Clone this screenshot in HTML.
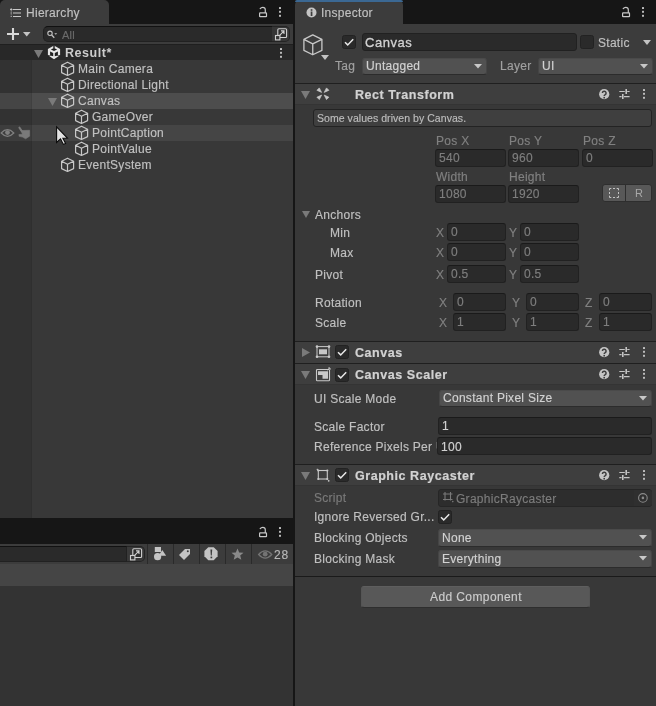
<!DOCTYPE html>
<html><head><meta charset="utf-8">
<style>
*{box-sizing:border-box;margin:0;padding:0}
html,body{width:656px;height:706px;overflow:hidden;background:#161616;font-family:"Liberation Sans",sans-serif;font-size:12px;color:#c4c4c4}
.a{position:absolute}
.t{position:absolute;white-space:nowrap;line-height:16px;letter-spacing:0.28px;will-change:transform;-webkit-text-stroke:0.15px currentColor}
.b{font-weight:bold;letter-spacing:0.55px;font-size:12.5px !important;-webkit-text-stroke:0.2px currentColor}
svg{position:absolute;overflow:visible}
</style></head><body>
<div class="a" style="left:0px;top:0px;width:293px;height:518px;background:#383838;border-radius:0px;"></div>
<div class="a" style="left:0px;top:0px;width:293px;height:24px;background:#161616;border-radius:0px;"></div>
<div class="a" style="left:0px;top:0px;width:109px;height:24px;background:#3c3c3c;border-radius:0px;border-radius:5px 5px 0 0"></div>
<svg style="left:10px;top:8px;" width="12" height="10" viewBox="0 0 12 10"><path d="M3 1.5H11M3 5H11M3 8.5H11" stroke="#c8c8c8" stroke-width="1.1"/><path d="M1.2 0.2V2.8M0 1.5H2.5" stroke="#c8c8c8" stroke-width="0.9"/><rect x="0.7" y="4.5" width="1" height="1" fill="#c8c8c8"/><rect x="0.7" y="8" width="1" height="1" fill="#c8c8c8"/><rect x="0.8" y="3" width="0.8" height="4.5" fill="#888"/></svg>
<div class="t" style="left:25.5px;top:4.8px;color:#c0c0c0;font-size:12px;">Hierarchy</div>
<svg style="left:259px;top:6px;" width="9" height="11" viewBox="0 0 9 11"><rect x="0.6" y="6.9" width="6.9" height="3.8" rx="0.5" fill="none" stroke="#c8c8c8" stroke-width="1.2"/><path d="M6.3 6.6V3.8Q6.3 1.3 3.8 1.3Q2.1 1.3 1.2 2.6" fill="none" stroke="#c8c8c8" stroke-width="1.2" stroke-linecap="round"/></svg>
<svg style="left:279px;top:7px;" width="2" height="10" viewBox="0 0 2 10"><rect x="0" y="0" width="2" height="2" rx="0.5" fill="#c4c4c4"/><rect x="0" y="3.8" width="2" height="2" rx="0.5" fill="#c4c4c4"/><rect x="0" y="7.8" width="2" height="2" rx="0.5" fill="#c4c4c4"/></svg>
<div class="a" style="left:0px;top:24px;width:293px;height:20px;background:#3c3c3c;border-radius:0px;"></div>
<svg style="left:6px;top:27px;" width="14" height="14" viewBox="0 0 14 14"><path d="M7 1V13M1 7H13" stroke="#d8d8d8" stroke-width="2.1"/></svg>
<svg style="left:23px;top:32px;" width="8" height="5" viewBox="0 0 8 5"><path d="M0 0H7.5L3.75 4.5Z" fill="#c4c4c4"/></svg>
<div class="a" style="left:43px;top:26px;width:232px;height:16px;background:#2a2a2a;border:1px solid #212121;border-radius:5px;border-top-color:#111111;border-radius:5px 0 0 5px"></div>
<svg style="left:47px;top:30px;" width="12" height="10" viewBox="0 0 12 10"><circle cx="3" cy="3.3" r="2.2" fill="none" stroke="#c0c0c0" stroke-width="1.1"/><path d="M4.6 5L7.3 7.8" stroke="#c0c0c0" stroke-width="1.3"/><path d="M7.3 3.2H10.2L8.75 4.8Z" fill="#c0c0c0"/></svg>
<div class="t" style="left:61.5px;top:26.5px;color:#6b6b6b;font-size:11px;">All</div>
<div class="a" style="left:272px;top:26px;width:18px;height:16px;background:#363636;border:1px solid #242424;border-radius:0px;border-left:0;border-radius:0 5px 5px 0"></div>
<svg style="left:274px;top:27px;" width="14" height="14" viewBox="0 0 14 14"><rect x="3.8" y="1.7" width="8.8" height="8.8" rx="1" fill="#2e2e2e" stroke="#d0d0d0" stroke-width="1.1"/><rect x="1.5" y="8.5" width="4.4" height="4.4" fill="#363636" stroke="#d0d0d0" stroke-width="1.1"/><path d="M5.6 8.3L9.6 4.3M7 3.9H10V6.9" fill="none" stroke="#d0d0d0" stroke-width="1.1"/></svg>
<div class="a" style="left:0px;top:44px;width:293px;height:16px;background:#282828;border-radius:0px;"></div>
<div class="a" style="left:0px;top:44px;width:293px;height:1px;background:#1f1f1f;border-radius:0px;"></div>
<svg style="left:34px;top:50px;" width="9" height="8" viewBox="0 0 9 8"><path d="M0 0H9L4.5 8Z" fill="#7a7a7a"/></svg>
<svg style="left:45px;top:44px;" width="18" height="18" viewBox="0 0 18 18"><path d="M9 1.6L15.1 5V11.2L9 15.3L2.9 11.2V5Z" fill="#e6e6e6"/><path d="M8.3 1.2H9.7V5H8.3Z M5.9 5.4L9 3.9L12.1 5.4L9 7.1Z M5.1 7.4L8.2 9.1V12.3L5.1 11.6Z M12.9 7.4L9.8 9.1V12.3L12.9 11.6Z M2.5 11.1L5.3 11.5L3.9 12.5Z M15.5 11.1L12.7 11.5L14.1 12.5Z" fill="#1e1e1e"/></svg>
<div class="t b" style="left:64.5px;top:44.8px;color:#cccccc;font-size:12px;-webkit-text-stroke:0">Result*</div>
<svg style="left:280px;top:48px;" width="2" height="10" viewBox="0 0 2 10"><rect x="0" y="0" width="2" height="2" rx="0.5" fill="#c4c4c4"/><rect x="0" y="3.8" width="2" height="2" rx="0.5" fill="#c4c4c4"/><rect x="0" y="7.8" width="2" height="2" rx="0.5" fill="#c4c4c4"/></svg>
<div class="a" style="left:0px;top:93px;width:293px;height:16px;background:#4d4d4d;border-radius:0px;"></div>
<div class="a" style="left:0px;top:125px;width:293px;height:16px;background:#454545;border-radius:0px;"></div>
<div class="a" style="left:0px;top:60px;width:32px;height:458px;background:rgba(0,0,0,0.1);border-radius:0px;border-right:1px solid rgba(0,0,0,0.06)"></div>
<svg style="left:61px;top:61px" width="14.0" height="15.0" viewBox="0 0 14 15"><path d="M6.5 1.2L12.6 4.2V11.6L6.5 14.5L0.6 11.6V4.2Z M0.6 4.2L6.5 7.2L12.6 4.2 M6.5 7.2V14.5" fill="none" stroke="#c8c8c8" stroke-width="1.2" stroke-linejoin="round"/></svg>
<div class="t" style="left:77.5px;top:60.8px;color:#c0c0c0;font-size:12px;">Main Camera</div>
<svg style="left:61px;top:77px" width="14.0" height="15.0" viewBox="0 0 14 15"><path d="M6.5 1.2L12.6 4.2V11.6L6.5 14.5L0.6 11.6V4.2Z M0.6 4.2L6.5 7.2L12.6 4.2 M6.5 7.2V14.5" fill="none" stroke="#c8c8c8" stroke-width="1.2" stroke-linejoin="round"/></svg>
<div class="t" style="left:77.5px;top:76.8px;color:#c0c0c0;font-size:12px;">Directional Light</div>
<svg style="left:61px;top:93px" width="14.0" height="15.0" viewBox="0 0 14 15"><path d="M6.5 1.2L12.6 4.2V11.6L6.5 14.5L0.6 11.6V4.2Z M0.6 4.2L6.5 7.2L12.6 4.2 M6.5 7.2V14.5" fill="none" stroke="#c8c8c8" stroke-width="1.2" stroke-linejoin="round"/></svg>
<div class="t" style="left:77.5px;top:92.8px;color:#c0c0c0;font-size:12px;">Canvas</div>
<svg style="left:75px;top:109px" width="14.0" height="15.0" viewBox="0 0 14 15"><path d="M6.5 1.2L12.6 4.2V11.6L6.5 14.5L0.6 11.6V4.2Z M0.6 4.2L6.5 7.2L12.6 4.2 M6.5 7.2V14.5" fill="none" stroke="#c8c8c8" stroke-width="1.2" stroke-linejoin="round"/></svg>
<div class="t" style="left:91.5px;top:108.8px;color:#c0c0c0;font-size:12px;">GameOver</div>
<svg style="left:75px;top:125px" width="14.0" height="15.0" viewBox="0 0 14 15"><path d="M6.5 1.2L12.6 4.2V11.6L6.5 14.5L0.6 11.6V4.2Z M0.6 4.2L6.5 7.2L12.6 4.2 M6.5 7.2V14.5" fill="none" stroke="#c8c8c8" stroke-width="1.2" stroke-linejoin="round"/></svg>
<div class="t" style="left:91.5px;top:124.8px;color:#c0c0c0;font-size:12px;">PointCaption</div>
<svg style="left:75px;top:141px" width="14.0" height="15.0" viewBox="0 0 14 15"><path d="M6.5 1.2L12.6 4.2V11.6L6.5 14.5L0.6 11.6V4.2Z M0.6 4.2L6.5 7.2L12.6 4.2 M6.5 7.2V14.5" fill="none" stroke="#c8c8c8" stroke-width="1.2" stroke-linejoin="round"/></svg>
<div class="t" style="left:91.5px;top:140.8px;color:#c0c0c0;font-size:12px;">PointValue</div>
<svg style="left:61px;top:157px" width="14.0" height="15.0" viewBox="0 0 14 15"><path d="M6.5 1.2L12.6 4.2V11.6L6.5 14.5L0.6 11.6V4.2Z M0.6 4.2L6.5 7.2L12.6 4.2 M6.5 7.2V14.5" fill="none" stroke="#c8c8c8" stroke-width="1.2" stroke-linejoin="round"/></svg>
<div class="t" style="left:77.5px;top:156.8px;color:#c0c0c0;font-size:12px;">EventSystem</div>
<svg style="left:48px;top:98px;" width="9" height="8" viewBox="0 0 9 8"><path d="M0 0H9L4.5 8Z" fill="#7a7a7a"/></svg>
<svg style="left:0px;top:128px;" width="16" height="10" viewBox="0 0 16 10"><path d="M1.2 5Q7.5 -1.6 13.8 5Q7.5 11.6 1.2 5Z" fill="none" stroke="#808080" stroke-width="1.2"/><circle cx="7.5" cy="4.6" r="2.4" fill="#808080"/></svg>
<svg style="left:16px;top:124px;" width="18" height="18" viewBox="0 0 18 18"><path d="M3.4 3.6L6.6 8.4" stroke="#7a7a7a" stroke-width="1.9" stroke-linecap="round"/><path d="M6.2 6.5L13.6 6.3V12.2L9.6 14.8L6.6 13.1L3.1 12.3L2.9 10.5L6.2 10.3Z" fill="#7a7a7a" stroke="#7a7a7a" stroke-width="0.6" stroke-linejoin="round"/></svg>
<svg style="left:0;top:0" width="656" height="706"><path d="M56.6 126.8L56.6 142.4L60.5 138.9L63.4 144.4L65.6 143.4L62.9 138.2L67.4 138Z" fill="#e2e2e2" stroke="#0a0a0a" stroke-width="1.1" stroke-linejoin="miter"/></svg>
<div class="a" style="left:0px;top:518px;width:293px;height:26px;background:#161616;border-radius:0px;"></div>
<svg style="left:259px;top:526px;" width="9" height="11" viewBox="0 0 9 11"><rect x="0.6" y="6.9" width="6.9" height="3.8" rx="0.5" fill="none" stroke="#c8c8c8" stroke-width="1.2"/><path d="M6.3 6.6V3.8Q6.3 1.3 3.8 1.3Q2.1 1.3 1.2 2.6" fill="none" stroke="#c8c8c8" stroke-width="1.2" stroke-linecap="round"/></svg>
<svg style="left:279px;top:527px;" width="2" height="10" viewBox="0 0 2 10"><rect x="0" y="0" width="2" height="2" rx="0.5" fill="#c4c4c4"/><rect x="0" y="3.8" width="2" height="2" rx="0.5" fill="#c4c4c4"/><rect x="0" y="7.8" width="2" height="2" rx="0.5" fill="#c4c4c4"/></svg>
<div class="a" style="left:0px;top:544px;width:293px;height:20px;background:#3c3c3c;border-radius:0px;"></div>
<div class="a" style="left:-6px;top:546px;width:133px;height:16px;background:#2a2a2a;border:1px solid #212121;border-radius:0px;border-top-color:#111111"></div>
<div class="a" style="left:127px;top:546px;width:18px;height:16px;background:#393939;border:1px solid #242424;border-radius:0px;border-left:0;border-radius:0 5px 5px 0"></div>
<svg style="left:129px;top:547px;" width="14" height="14" viewBox="0 0 14 14"><rect x="3.8" y="1.7" width="8.8" height="8.8" rx="1" fill="#2e2e2e" stroke="#d0d0d0" stroke-width="1.1"/><rect x="1.5" y="8.5" width="4.4" height="4.4" fill="#393939" stroke="#d0d0d0" stroke-width="1.1"/><path d="M5.6 8.3L9.6 4.3M7 3.9H10V6.9" fill="none" stroke="#d0d0d0" stroke-width="1.1"/></svg>
<div class="a" style="left:147px;top:544px;width:1px;height:20px;background:#2a2a2a;border-radius:0px;"></div>
<div class="a" style="left:173px;top:544px;width:1px;height:20px;background:#2a2a2a;border-radius:0px;"></div>
<div class="a" style="left:199px;top:544px;width:1px;height:20px;background:#2a2a2a;border-radius:0px;"></div>
<div class="a" style="left:225px;top:544px;width:1px;height:20px;background:#2a2a2a;border-radius:0px;"></div>
<div class="a" style="left:251px;top:544px;width:1px;height:20px;background:#2a2a2a;border-radius:0px;"></div>
<svg style="left:153px;top:548px;" width="14" height="13" viewBox="0 0 14 13"><rect x="1.8" y="-1" width="6.2" height="5" fill="#c4c4c4"/><path d="M9.3 2L13.1 7.7H5.5Z" fill="#c4c4c4"/><circle cx="4.6" cy="8.7" r="3.6" fill="#c4c4c4"/></svg>
<svg style="left:178px;top:548px;" width="14" height="13" viewBox="0 0 14 13"><path d="M7 1H12V6L6 12L1 7Z" fill="#c4c4c4"/><circle cx="9.8" cy="3.2" r="1" fill="#3c3c3c"/></svg>
<svg style="left:204px;top:547px;" width="14" height="14" viewBox="0 0 14 14"><path d="M4.3 0.2H9.7L13.6 4.1V9.3L9.7 13.2H4.3L0.4 9.3V4.1Z" fill="#c4c4c4"/><path d="M6.4 2.6H8.2L7.8 8.6H6.8Z" fill="#3c3c3c"/><rect x="6.5" y="9.6" width="1.7" height="1.7" fill="#3c3c3c"/></svg>
<svg style="left:231px;top:548px;" width="13" height="13" viewBox="0 0 13 13"><path d="M6.5 0.5L8.2 4.6L12.5 4.8L9.2 7.6L10.3 11.8L6.5 9.4L2.7 11.8L3.8 7.6L0.5 4.8L4.8 4.6Z" fill="#8a8a8a"/></svg>
<svg style="left:258px;top:550px;" width="15" height="9" viewBox="0 0 15 9"><path d="M0.6 4.5Q7.2 -2.6 13.8 4.5Q7.2 11.6 0.6 4.5Z" fill="none" stroke="#747474" stroke-width="1.2"/><circle cx="7.2" cy="4.2" r="2.4" fill="#747474"/></svg>
<div class="t" style="left:274.0px;top:546.8px;color:#b8b8b8;font-size:12px;letter-spacing:0.9px">28</div>
<div class="a" style="left:0px;top:564px;width:293px;height:22px;background:#454545;border-radius:0px;"></div>
<div class="a" style="left:0px;top:586px;width:293px;height:120px;background:#333333;border-radius:0px;"></div>
<div class="a" style="left:295px;top:0px;width:361px;height:706px;background:#383838;border-radius:0px;"></div>
<div class="a" style="left:295px;top:0px;width:361px;height:24px;background:#161616;border-radius:0px;"></div>
<div class="a" style="left:295px;top:0px;width:108px;height:24px;background:#3c3c3c;border-radius:0px;border-radius:5px 5px 0 0"></div>
<div class="a" style="left:295px;top:0px;width:108px;height:2px;background:#3b6893;border-radius:0px;border-radius:5px 5px 0 0"></div>
<svg style="left:306px;top:7px;" width="11" height="11" viewBox="0 0 11 11"><circle cx="5.5" cy="5.5" r="5" fill="#c4c4c4"/><rect x="4.7" y="4.5" width="1.7" height="4.5" fill="#3c3c3c"/><rect x="4.7" y="2.2" width="1.7" height="1.6" fill="#3c3c3c"/></svg>
<div class="t" style="left:320.5px;top:4.8px;color:#c0c0c0;font-size:12px;">Inspector</div>
<svg style="left:622px;top:6px;" width="9" height="11" viewBox="0 0 9 11"><rect x="0.6" y="6.9" width="6.9" height="3.8" rx="0.5" fill="none" stroke="#c8c8c8" stroke-width="1.2"/><path d="M6.3 6.6V3.8Q6.3 1.3 3.8 1.3Q2.1 1.3 1.2 2.6" fill="none" stroke="#c8c8c8" stroke-width="1.2" stroke-linecap="round"/></svg>
<svg style="left:642px;top:7px;" width="2" height="10" viewBox="0 0 2 10"><rect x="0" y="0" width="2" height="2" rx="0.5" fill="#c4c4c4"/><rect x="0" y="3.8" width="2" height="2" rx="0.5" fill="#c4c4c4"/><rect x="0" y="7.8" width="2" height="2" rx="0.5" fill="#c4c4c4"/></svg>
<div class="a" style="left:295px;top:24px;width:361px;height:59px;background:#3c3c3c;border-radius:0px;"></div>
<svg style="left:302.6px;top:33.4px" width="21.0" height="22.5" viewBox="0 0 14 15"><path d="M6.5 1.2L12.6 4.2V11.6L6.5 14.5L0.6 11.6V4.2Z M0.6 4.2L6.5 7.2L12.6 4.2 M6.5 7.2V14.5" fill="none" stroke="#c8c8c8" stroke-width="0.8666666666666667" stroke-linejoin="round"/></svg>
<svg style="left:321px;top:55px;" width="8" height="5" viewBox="0 0 8 5"><path d="M0 0H8L4 5Z" fill="#c4c4c4"/></svg>
<div class="a" style="left:342px;top:35px;width:14px;height:14px;background:#2a2a2a;border:1px solid #222222;border-radius:2.5px;"></div>
<svg style="left:342px;top:35px;" width="14" height="14" viewBox="0 0 14 14"><path d="M3 7.3L5.7 9.9L11.2 4.2" fill="none" stroke="#e8e8e8" stroke-width="1.5"/></svg>
<div class="a" style="left:362px;top:33px;width:215px;height:18px;background:#2a2a2a;border:1px solid #212121;border-radius:3px;"></div>
<div class="t" style="left:365.0px;top:34.99999999999999px;color:#d2d2d2;font-size:13px;letter-spacing:0.55px;-webkit-text-stroke:0.3px currentColor">Canvas</div>
<div class="a" style="left:580px;top:35px;width:14px;height:14px;background:#2a2a2a;border:1px solid #222222;border-radius:2.5px;"></div>
<div class="t" style="left:597.5px;top:34.8px;color:#c0c0c0;font-size:12px;">Static</div>
<svg style="left:643px;top:40px;" width="8" height="5" viewBox="0 0 8 5"><path d="M0 0H8L4 5Z" fill="#c4c4c4"/></svg>
<div class="t" style="left:334.5px;top:57.8px;color:#a0a0a0;font-size:12px;">Tag</div>
<div class="a" style="left:362px;top:58px;width:125px;height:17px;background:#515151;border:1px solid #303030;border-radius:3px;border-color:#4a4a4a #454545 #2c2c2c #454545"></div>
<div class="t" style="left:365.5px;top:58.3px;color:#d2d2d2;font-size:12px;">Untagged</div>
<svg style="left:474px;top:64px;" width="8" height="5" viewBox="0 0 8 5"><path d="M0 0H8L4 4.6Z" fill="#c8c8c8"/></svg>
<div class="t" style="left:499.5px;top:57.8px;color:#a0a0a0;font-size:12px;">Layer</div>
<div class="a" style="left:538px;top:58px;width:115px;height:17px;background:#515151;border:1px solid #303030;border-radius:3px;border-color:#4a4a4a #454545 #2c2c2c #454545"></div>
<div class="t" style="left:541.5px;top:58.3px;color:#d2d2d2;font-size:12px;">UI</div>
<svg style="left:640px;top:64px;" width="8" height="5" viewBox="0 0 8 5"><path d="M0 0H8L4 4.6Z" fill="#c8c8c8"/></svg>
<div class="a" style="left:295px;top:83px;width:361px;height:1px;background:#1f1f1f;border-radius:0px;"></div>
<div class="a" style="left:295px;top:84px;width:361px;height:20px;background:#3e3e3e;border-radius:0px;"></div>
<div class="a" style="left:295px;top:104px;width:361px;height:1px;background:#343434;border-radius:0px;"></div>
<svg style="left:301px;top:91px;" width="9" height="8" viewBox="0 0 9 8"><path d="M0 0H9L4.5 8Z" fill="#7a7a7a"/></svg>
<div class="t b" style="left:354.5px;top:86.6px;color:#d2d2d2;font-size:12px;">Rect Transform</div>
<svg style="left:598.8px;top:89px;" width="11" height="11" viewBox="0 0 11 11"><circle cx="5.2" cy="5.2" r="5.1" fill="#c4c4c4"/><path d="M3.4 4.1A1.85 1.85 0 1 1 6 5.8Q5.2 6.2 5.2 7.1" fill="none" stroke="#3e3e3e" stroke-width="1.5"/><rect x="4.4" y="7.9" width="1.6" height="1.6" fill="#3e3e3e"/></svg>
<svg style="left:618.5px;top:89px;" width="11" height="11" viewBox="0 0 11 11"><path d="M0.3 2.5H5.8M8.2 2.5H10.6M0.3 7.6H2.6M5 7.6H10.6" stroke="#c4c4c4" stroke-width="1.2"/><path d="M7.2 0V5M3.8 5.1V10.1" stroke="#c4c4c4" stroke-width="1.6"/></svg>
<svg style="left:643px;top:89.2px;" width="2" height="10" viewBox="0 0 2 10"><rect x="0" y="0" width="2" height="2" rx="0.5" fill="#c4c4c4"/><rect x="0" y="3.8" width="2" height="2" rx="0.5" fill="#c4c4c4"/><rect x="0" y="7.8" width="2" height="2" rx="0.5" fill="#c4c4c4"/></svg>
<svg style="left:316px;top:87px;" width="14" height="14" viewBox="0 0 14 14"><path d="M0.9 3.3L3.3 0.9L5.6 5.4Z M12.9 3.3L10.5 0.9L8.2 5.4Z M0.9 10.2L3.3 12.6L5.6 8.1Z M12.9 10.2L10.5 12.6L8.2 8.1Z" fill="#c8c8c8" stroke="#c8c8c8" stroke-width="0.7" stroke-linejoin="round"/></svg>
<div class="a" style="left:295px;top:105px;width:361px;height:1px;background:#383838;border-radius:0px;"></div>
<div class="a" style="left:313px;top:109px;width:339px;height:18px;background:rgba(96,96,96,0.2);border:1px solid #232323;border-radius:3px;"></div>
<div class="t" style="left:316.5px;top:110.3px;color:#bdbdbd;font-size:10.5px;letter-spacing:0.05px">Some values driven by Canvas.</div>
<div class="t" style="left:435.5px;top:132.8px;color:#808080;font-size:12px;">Pos X</div>
<div class="t" style="left:508.5px;top:132.8px;color:#808080;font-size:12px;">Pos Y</div>
<div class="t" style="left:582.5px;top:132.8px;color:#808080;font-size:12px;">Pos Z</div>
<div class="a" style="left:435px;top:149px;width:71px;height:18px;background:#2a2a2a;border:1px solid #212121;border-radius:3px;border-top-color:#1a1a1a"></div>
<div class="t" style="left:438.5px;top:149.8px;color:#7e7e7e;font-size:12px;">540</div>
<div class="a" style="left:508px;top:149px;width:71px;height:18px;background:#2a2a2a;border:1px solid #212121;border-radius:3px;border-top-color:#1a1a1a"></div>
<div class="t" style="left:511.5px;top:149.8px;color:#7e7e7e;font-size:12px;">960</div>
<div class="a" style="left:582px;top:149px;width:71px;height:18px;background:#2a2a2a;border:1px solid #212121;border-radius:3px;border-top-color:#1a1a1a"></div>
<div class="t" style="left:585.5px;top:149.8px;color:#7e7e7e;font-size:12px;">0</div>
<div class="t" style="left:435.5px;top:168.8px;color:#808080;font-size:12px;">Width</div>
<div class="t" style="left:508.5px;top:168.8px;color:#808080;font-size:12px;">Height</div>
<div class="a" style="left:435px;top:185px;width:71px;height:18px;background:#2a2a2a;border:1px solid #212121;border-radius:3px;border-top-color:#1a1a1a"></div>
<div class="t" style="left:438.5px;top:185.8px;color:#7e7e7e;font-size:12px;">1080</div>
<div class="a" style="left:508px;top:185px;width:71px;height:18px;background:#2a2a2a;border:1px solid #212121;border-radius:3px;border-top-color:#1a1a1a"></div>
<div class="t" style="left:511.5px;top:185.8px;color:#7e7e7e;font-size:12px;">1920</div>
<div class="a" style="left:602px;top:184px;width:50px;height:18px;background:#585858;border:1px solid #2e2e2e;border-radius:3px;"></div>
<div class="a" style="left:625px;top:184px;width:1px;height:18px;background:#2e2e2e;border-radius:0px;"></div>
<svg style="left:608px;top:187px;" width="12" height="12" viewBox="0 0 12 12"><path d="M1.5 3.3V1.5H3.3M8.7 1.5H10.5V3.3M10.5 8.7V10.5H8.7M3.3 10.5H1.5V8.7M5 1.5H7M5 10.5H7M1.5 5V7M10.5 5V7" fill="none" stroke="#c4c4c4" stroke-width="1"/></svg>
<div class="t" style="left:635.0px;top:185.0px;color:#a8a8a8;font-size:11px;-webkit-text-stroke:0">R</div>
<svg style="left:302px;top:211px;" width="8" height="7" viewBox="0 0 8 7"><path d="M0 0H8L4.0 7Z" fill="#7a7a7a"/></svg>
<div class="t" style="left:314.5px;top:206.8px;color:#c0c0c0;font-size:12px;">Anchors</div>
<div class="t" style="left:329.5px;top:224.8px;color:#c0c0c0;font-size:12px;">Min</div>
<div class="t" style="left:329.5px;top:244.8px;color:#c0c0c0;font-size:12px;">Max</div>
<div class="t" style="left:314.5px;top:266.8px;color:#c0c0c0;font-size:12px;">Pivot</div>
<div class="t" style="left:314.5px;top:294.8px;color:#c0c0c0;font-size:12px;">Rotation</div>
<div class="t" style="left:314.5px;top:314.8px;color:#c0c0c0;font-size:12px;">Scale</div>
<div class="t" style="left:435.5px;top:224.8px;color:#808080;font-size:12px;">X</div>
<div class="a" style="left:447px;top:223px;width:59px;height:18px;background:#2a2a2a;border:1px solid #212121;border-radius:3px;border-top-color:#1a1a1a"></div>
<div class="t" style="left:450.5px;top:223.8px;color:#7e7e7e;font-size:12px;">0</div>
<div class="t" style="left:508.5px;top:224.8px;color:#808080;font-size:12px;">Y</div>
<div class="a" style="left:520px;top:223px;width:59px;height:18px;background:#2a2a2a;border:1px solid #212121;border-radius:3px;border-top-color:#1a1a1a"></div>
<div class="t" style="left:523.5px;top:223.8px;color:#7e7e7e;font-size:12px;">0</div>
<div class="t" style="left:435.5px;top:244.8px;color:#808080;font-size:12px;">X</div>
<div class="a" style="left:447px;top:243px;width:59px;height:18px;background:#2a2a2a;border:1px solid #212121;border-radius:3px;border-top-color:#1a1a1a"></div>
<div class="t" style="left:450.5px;top:243.8px;color:#7e7e7e;font-size:12px;">0</div>
<div class="t" style="left:508.5px;top:244.8px;color:#808080;font-size:12px;">Y</div>
<div class="a" style="left:520px;top:243px;width:59px;height:18px;background:#2a2a2a;border:1px solid #212121;border-radius:3px;border-top-color:#1a1a1a"></div>
<div class="t" style="left:523.5px;top:243.8px;color:#7e7e7e;font-size:12px;">0</div>
<div class="t" style="left:435.5px;top:266.8px;color:#808080;font-size:12px;">X</div>
<div class="a" style="left:447px;top:265px;width:59px;height:18px;background:#2a2a2a;border:1px solid #212121;border-radius:3px;border-top-color:#1a1a1a"></div>
<div class="t" style="left:450.5px;top:265.8px;color:#7e7e7e;font-size:12px;">0.5</div>
<div class="t" style="left:508.5px;top:266.8px;color:#808080;font-size:12px;">Y</div>
<div class="a" style="left:520px;top:265px;width:59px;height:18px;background:#2a2a2a;border:1px solid #212121;border-radius:3px;border-top-color:#1a1a1a"></div>
<div class="t" style="left:523.5px;top:265.8px;color:#7e7e7e;font-size:12px;">0.5</div>
<div class="t" style="left:438.5px;top:294.8px;color:#808080;font-size:12px;">X</div>
<div class="a" style="left:453px;top:293px;width:53px;height:18px;background:#2a2a2a;border:1px solid #212121;border-radius:3px;border-top-color:#1a1a1a"></div>
<div class="t" style="left:456.5px;top:293.8px;color:#7e7e7e;font-size:12px;">0</div>
<div class="t" style="left:511.5px;top:294.8px;color:#808080;font-size:12px;">Y</div>
<div class="a" style="left:526px;top:293px;width:53px;height:18px;background:#2a2a2a;border:1px solid #212121;border-radius:3px;border-top-color:#1a1a1a"></div>
<div class="t" style="left:529.5px;top:293.8px;color:#7e7e7e;font-size:12px;">0</div>
<div class="t" style="left:584.5px;top:294.8px;color:#808080;font-size:12px;">Z</div>
<div class="a" style="left:599px;top:293px;width:53px;height:18px;background:#2a2a2a;border:1px solid #212121;border-radius:3px;border-top-color:#1a1a1a"></div>
<div class="t" style="left:602.5px;top:293.8px;color:#7e7e7e;font-size:12px;">0</div>
<div class="t" style="left:438.5px;top:314.8px;color:#808080;font-size:12px;">X</div>
<div class="a" style="left:453px;top:313px;width:53px;height:18px;background:#2a2a2a;border:1px solid #212121;border-radius:3px;border-top-color:#1a1a1a"></div>
<div class="t" style="left:456.5px;top:313.8px;color:#7e7e7e;font-size:12px;">1</div>
<div class="t" style="left:511.5px;top:314.8px;color:#808080;font-size:12px;">Y</div>
<div class="a" style="left:526px;top:313px;width:53px;height:18px;background:#2a2a2a;border:1px solid #212121;border-radius:3px;border-top-color:#1a1a1a"></div>
<div class="t" style="left:529.5px;top:313.8px;color:#7e7e7e;font-size:12px;">1</div>
<div class="t" style="left:584.5px;top:314.8px;color:#808080;font-size:12px;">Z</div>
<div class="a" style="left:599px;top:313px;width:53px;height:18px;background:#2a2a2a;border:1px solid #212121;border-radius:3px;border-top-color:#1a1a1a"></div>
<div class="t" style="left:602.5px;top:313.8px;color:#7e7e7e;font-size:12px;">1</div>
<div class="a" style="left:295px;top:341px;width:361px;height:1px;background:#1f1f1f;border-radius:0px;"></div>
<div class="a" style="left:295px;top:342px;width:361px;height:21px;background:#3e3e3e;border-radius:0px;"></div>
<div class="a" style="left:295px;top:363px;width:361px;height:1px;background:#343434;border-radius:0px;"></div>
<svg style="left:302px;top:348px;" width="8" height="9" viewBox="0 0 8 9"><path d="M0 0L8 4.5L0 9Z" fill="#7a7a7a"/></svg>
<div class="t b" style="left:354.5px;top:344.6px;color:#d2d2d2;font-size:12px;">Canvas</div>
<svg style="left:598.8px;top:347px;" width="11" height="11" viewBox="0 0 11 11"><circle cx="5.2" cy="5.2" r="5.1" fill="#c4c4c4"/><path d="M3.4 4.1A1.85 1.85 0 1 1 6 5.8Q5.2 6.2 5.2 7.1" fill="none" stroke="#3e3e3e" stroke-width="1.5"/><rect x="4.4" y="7.9" width="1.6" height="1.6" fill="#3e3e3e"/></svg>
<svg style="left:618.5px;top:347px;" width="11" height="11" viewBox="0 0 11 11"><path d="M0.3 2.5H5.8M8.2 2.5H10.6M0.3 7.6H2.6M5 7.6H10.6" stroke="#c4c4c4" stroke-width="1.2"/><path d="M7.2 0V5M3.8 5.1V10.1" stroke="#c4c4c4" stroke-width="1.6"/></svg>
<svg style="left:643px;top:347.2px;" width="2" height="10" viewBox="0 0 2 10"><rect x="0" y="0" width="2" height="2" rx="0.5" fill="#c4c4c4"/><rect x="0" y="3.8" width="2" height="2" rx="0.5" fill="#c4c4c4"/><rect x="0" y="7.8" width="2" height="2" rx="0.5" fill="#c4c4c4"/></svg>
<svg style="left:315px;top:345px;" width="16" height="14" viewBox="0 0 16 14"><rect x="2" y="1.6" width="12" height="10.2" fill="none" stroke="#c8c8c8" stroke-width="1"/><rect x="4" y="4.3" width="8" height="5" fill="#c8c8c8"/><circle cx="2" cy="1.6" r="1.3" fill="#c8c8c8"/><circle cx="14" cy="1.6" r="1.3" fill="#c8c8c8"/><circle cx="2" cy="11.8" r="1.3" fill="#c8c8c8"/><circle cx="14" cy="11.8" r="1.3" fill="#c8c8c8"/></svg>
<div class="a" style="left:335px;top:345px;width:14px;height:14px;background:#2a2a2a;border:1px solid #222222;border-radius:2.5px;"></div>
<svg style="left:335px;top:345px;" width="14" height="14" viewBox="0 0 14 14"><path d="M3 7.3L5.7 9.9L11.2 4.2" fill="none" stroke="#e8e8e8" stroke-width="1.5"/></svg>
<div class="a" style="left:295px;top:363px;width:361px;height:1px;background:#1f1f1f;border-radius:0px;"></div>
<div class="a" style="left:295px;top:364px;width:361px;height:20px;background:#3e3e3e;border-radius:0px;"></div>
<div class="a" style="left:295px;top:384px;width:361px;height:1px;background:#343434;border-radius:0px;"></div>
<svg style="left:301px;top:371px;" width="9" height="8" viewBox="0 0 9 8"><path d="M0 0H9L4.5 8Z" fill="#7a7a7a"/></svg>
<div class="t b" style="left:354.5px;top:366.6px;color:#d2d2d2;font-size:12px;">Canvas Scaler</div>
<svg style="left:598.8px;top:369px;" width="11" height="11" viewBox="0 0 11 11"><circle cx="5.2" cy="5.2" r="5.1" fill="#c4c4c4"/><path d="M3.4 4.1A1.85 1.85 0 1 1 6 5.8Q5.2 6.2 5.2 7.1" fill="none" stroke="#3e3e3e" stroke-width="1.5"/><rect x="4.4" y="7.9" width="1.6" height="1.6" fill="#3e3e3e"/></svg>
<svg style="left:618.5px;top:369px;" width="11" height="11" viewBox="0 0 11 11"><path d="M0.3 2.5H5.8M8.2 2.5H10.6M0.3 7.6H2.6M5 7.6H10.6" stroke="#c4c4c4" stroke-width="1.2"/><path d="M7.2 0V5M3.8 5.1V10.1" stroke="#c4c4c4" stroke-width="1.6"/></svg>
<svg style="left:643px;top:369.2px;" width="2" height="10" viewBox="0 0 2 10"><rect x="0" y="0" width="2" height="2" rx="0.5" fill="#c4c4c4"/><rect x="0" y="3.8" width="2" height="2" rx="0.5" fill="#c4c4c4"/><rect x="0" y="7.8" width="2" height="2" rx="0.5" fill="#c4c4c4"/></svg>
<svg style="left:315px;top:368px;" width="16" height="14" viewBox="0 0 16 14"><rect x="1.5" y="1.5" width="13" height="11.2" rx="0.8" fill="none" stroke="#c8c8c8" stroke-width="1.1"/><path d="M3 3.2H13V10.7H7.5V7H3Z" fill="#c8c8c8"/><path d="M12.2 2.2L14.8 0M13.2 0H15V1.8" stroke="#c8c8c8" stroke-width="1"/></svg>
<div class="a" style="left:335px;top:368px;width:14px;height:14px;background:#2a2a2a;border:1px solid #222222;border-radius:2.5px;"></div>
<svg style="left:335px;top:368px;" width="14" height="14" viewBox="0 0 14 14"><path d="M3 7.3L5.7 9.9L11.2 4.2" fill="none" stroke="#e8e8e8" stroke-width="1.5"/></svg>
<div class="t" style="left:313.5px;top:390.8px;color:#c0c0c0;font-size:12px;">UI Scale Mode</div>
<div class="a" style="left:439px;top:390px;width:213px;height:17px;background:#515151;border:1px solid #303030;border-radius:3px;border-color:#4a4a4a #454545 #2c2c2c #454545"></div>
<div class="t" style="left:442.5px;top:390.3px;color:#d2d2d2;font-size:12px;">Constant Pixel Size</div>
<svg style="left:639px;top:396px;" width="8" height="5" viewBox="0 0 8 5"><path d="M0 0H8L4 4.6Z" fill="#c8c8c8"/></svg>
<div class="t" style="left:313.5px;top:418.5px;color:#c0c0c0;font-size:12px;">Scale Factor</div>
<div class="a" style="left:438px;top:417px;width:214px;height:18px;background:#2a2a2a;border:1px solid #212121;border-radius:3px;border-top-color:#1a1a1a"></div>
<div class="t" style="left:441.5px;top:417.8px;color:#d2d2d2;font-size:12px;">1</div>
<div class="t" style="left:313.5px;top:438.5px;color:#c0c0c0;font-size:12px;">Reference Pixels Per U</div>
<div class="a" style="left:437px;top:437px;width:215px;height:18px;background:#2a2a2a;border:1px solid #212121;border-radius:3px;border-top-color:#1a1a1a"></div>
<div class="t" style="left:440.5px;top:439.3px;color:#d2d2d2;font-size:12px;">100</div>
<div class="a" style="left:295px;top:464px;width:361px;height:1px;background:#1f1f1f;border-radius:0px;"></div>
<div class="a" style="left:295px;top:465px;width:361px;height:20px;background:#3e3e3e;border-radius:0px;"></div>
<div class="a" style="left:295px;top:485px;width:361px;height:1px;background:#343434;border-radius:0px;"></div>
<svg style="left:301px;top:472px;" width="9" height="8" viewBox="0 0 9 8"><path d="M0 0H9L4.5 8Z" fill="#7a7a7a"/></svg>
<div class="t b" style="left:354.5px;top:467.6px;color:#d2d2d2;font-size:12px;">Graphic Raycaster</div>
<svg style="left:598.8px;top:470px;" width="11" height="11" viewBox="0 0 11 11"><circle cx="5.2" cy="5.2" r="5.1" fill="#c4c4c4"/><path d="M3.4 4.1A1.85 1.85 0 1 1 6 5.8Q5.2 6.2 5.2 7.1" fill="none" stroke="#3e3e3e" stroke-width="1.5"/><rect x="4.4" y="7.9" width="1.6" height="1.6" fill="#3e3e3e"/></svg>
<svg style="left:618.5px;top:470px;" width="11" height="11" viewBox="0 0 11 11"><path d="M0.3 2.5H5.8M8.2 2.5H10.6M0.3 7.6H2.6M5 7.6H10.6" stroke="#c4c4c4" stroke-width="1.2"/><path d="M7.2 0V5M3.8 5.1V10.1" stroke="#c4c4c4" stroke-width="1.6"/></svg>
<svg style="left:643px;top:470.2px;" width="2" height="10" viewBox="0 0 2 10"><rect x="0" y="0" width="2" height="2" rx="0.5" fill="#c4c4c4"/><rect x="0" y="3.8" width="2" height="2" rx="0.5" fill="#c4c4c4"/><rect x="0" y="7.8" width="2" height="2" rx="0.5" fill="#c4c4c4"/></svg>
<svg style="left:315px;top:467px;" width="16" height="16" viewBox="0 0 16 16"><rect x="3.3" y="3.5" width="9" height="8.5" fill="none" stroke="#c8c8c8" stroke-width="1.1"/><circle cx="3.3" cy="3.5" r="1.1" fill="#c8c8c8"/><circle cx="12.3" cy="3.5" r="1.1" fill="#c8c8c8"/><circle cx="3.3" cy="12" r="1.1" fill="#c8c8c8"/><circle cx="12.3" cy="12" r="1.1" fill="#c8c8c8"/><path d="M1.8 1.8L3.3 3.5" stroke="#c8c8c8" stroke-width="1.1"/><circle cx="13.7" cy="13.8" r="0.9" fill="#c8c8c8"/></svg>
<div class="a" style="left:335px;top:468px;width:14px;height:14px;background:#2a2a2a;border:1px solid #222222;border-radius:2.5px;"></div>
<svg style="left:335px;top:468px;" width="14" height="14" viewBox="0 0 14 14"><path d="M3 7.3L5.7 9.9L11.2 4.2" fill="none" stroke="#e8e8e8" stroke-width="1.5"/></svg>
<div class="t" style="left:313.5px;top:489.8px;color:#7a7a7a;font-size:12px;">Script</div>
<div class="a" style="left:438px;top:489px;width:214px;height:18px;background:#2a2a2a;border:1px solid #212121;border-radius:3px;opacity:0.75"></div>
<svg style="left:442px;top:491px;" width="12" height="12" viewBox="0 0 12 12"><path d="M3 1V9.5M8.5 1V9.5M1 3H10.5M1 8.5H10.5" stroke="#7a7a7a" stroke-width="1.1"/><circle cx="10.8" cy="10.6" r="0.8" fill="#7a7a7a"/></svg>
<div class="t" style="left:455.5px;top:490.8px;color:#7c7c7c;font-size:12px;">GraphicRaycaster</div>
<div class="a" style="left:634px;top:490px;width:18px;height:16px;background:#2f2f2f;border-radius:0px;border-radius:0 2px 2px 0"></div>
<svg style="left:638px;top:493px;" width="10" height="10" viewBox="0 0 10 10"><circle cx="4.9" cy="4.9" r="4.3" fill="none" stroke="#8a8a8a" stroke-width="1.1"/><circle cx="4.9" cy="4.9" r="1.3" fill="#8a8a8a"/></svg>
<div class="t" style="left:313.5px;top:508.8px;color:#c0c0c0;font-size:12px;">Ignore Reversed Gr...</div>
<div class="a" style="left:438px;top:510px;width:14px;height:14px;background:#2a2a2a;border:1px solid #222222;border-radius:2.5px;"></div>
<svg style="left:438px;top:510px;" width="14" height="14" viewBox="0 0 14 14"><path d="M3 7.3L5.7 9.9L11.2 4.2" fill="none" stroke="#e8e8e8" stroke-width="1.5"/></svg>
<div class="t" style="left:313.5px;top:530.0999999999999px;color:#c0c0c0;font-size:12px;">Blocking Objects</div>
<div class="a" style="left:438px;top:529px;width:214px;height:18px;background:#515151;border:1px solid #303030;border-radius:3px;border-color:#4a4a4a #454545 #2c2c2c #454545"></div>
<div class="t" style="left:441.5px;top:530.0px;color:#d2d2d2;font-size:12px;">None</div>
<svg style="left:639px;top:535px;" width="8" height="5" viewBox="0 0 8 5"><path d="M0 0H8L4 4.6Z" fill="#c8c8c8"/></svg>
<div class="t" style="left:313.5px;top:551.0999999999999px;color:#c0c0c0;font-size:12px;">Blocking Mask</div>
<div class="a" style="left:438px;top:550px;width:214px;height:18px;background:#515151;border:1px solid #303030;border-radius:3px;border-color:#4a4a4a #454545 #2c2c2c #454545"></div>
<div class="t" style="left:441.5px;top:551.0px;color:#d2d2d2;font-size:12px;">Everything</div>
<svg style="left:639px;top:556px;" width="8" height="5" viewBox="0 0 8 5"><path d="M0 0H8L4 4.6Z" fill="#c8c8c8"/></svg>
<div class="a" style="left:295px;top:576px;width:361px;height:1px;background:#1a1a1a;border-radius:0px;"></div>
<div class="a" style="left:361px;top:586px;width:229px;height:22px;background:#585858;border:1px solid #303030;border-radius:3px;border-color:#5e5e5e #555 #2e2e2e #555"></div>
<div class="t" style="left:429.5px;top:589.3px;color:#cccccc;font-size:12px;letter-spacing:0.4px">Add Component</div>
</body></html>
